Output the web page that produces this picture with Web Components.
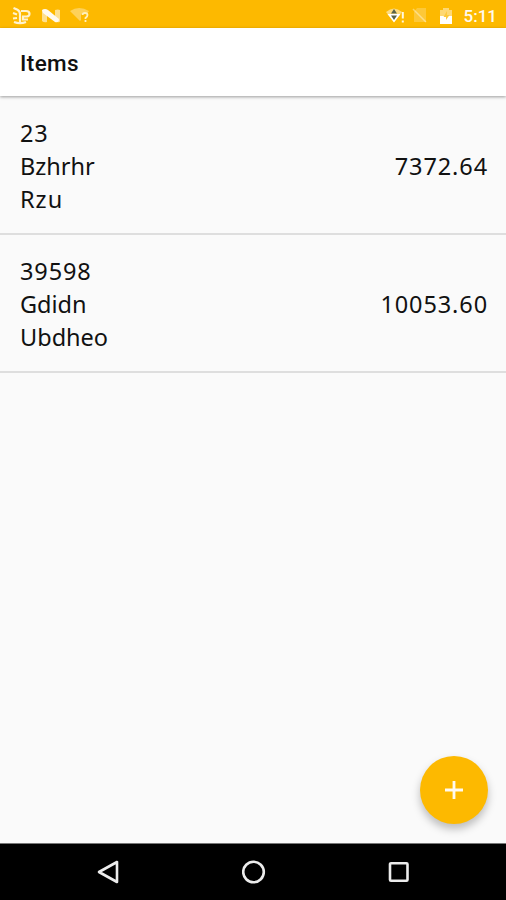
<!DOCTYPE html>
<html lang="en">
<head>
<meta charset="utf-8">
<title>Items</title>
<style>
    body {
        margin: 0;
        --accent: #fdb900;
        --page: #fafafa;
        font-family: "Noto Sans", sans-serif;
    }
    .wide {
        letter-spacing: 1px;
    }
</style>
</head>
<body>
<items-screen>
    <status-bar slot="status" time="5:11"></status-bar>
    <app-bar slot="header">Items</app-bar>
    <item-row>
        <span slot="code">23</span>
        <span slot="name">Bzhrhr</span>
        <span slot="unit" class="wide">Rzu</span>
        <span slot="price">7372.64</span>
    </item-row>
    <item-row>
        <span slot="code">39598</span>
        <span slot="name">Gdidn</span>
        <span slot="unit">Ubdheo</span>
        <span slot="price">10053.60</span>
    </item-row>
    <add-button slot="action"></add-button>
    <nav-bar slot="nav"></nav-bar>
</items-screen>

<script>
class ItemsScreen extends HTMLElement {
    connectedCallback() {
        const shadow = this.attachShadow({mode: 'open'});
        shadow.innerHTML = `
            <style>
                :host {
                    display: flex;
                    flex-direction: column;
                    position: relative;
                    height: 900px;
                    overflow: hidden;
                    background-color: var(--page);
                }
                main {
                    flex: 1;
                }
            </style>
            <slot name="status"></slot>
            <slot name="header"></slot>
            <main><slot></slot></main>
            <slot name="action"></slot>
            <slot name="nav"></slot>`;
    }
}

class StatusBar extends HTMLElement {
    connectedCallback() {
        const shadow = this.attachShadow({mode: 'open'});
        shadow.innerHTML = `
            <style>
                :host {
                    display: flex;
                    justify-content: space-between;
                    align-items: center;
                    box-sizing: border-box;
                    height: 28px;
                    padding: 3px 9px 0 11px;
                    background-color: var(--accent);
                    color: #fffaf0;
                    font: 500 17px/24px Roboto, sans-serif;
                }
                div {
                    display: flex;
                    align-items: center;
                }
                .left { gap: 9px; }
                svg { display: block; }
                .wifi { margin-right: 5px; }
                .sim { margin-right: 13px; }
                .battery { margin-right: 12px; }
            </style>
            <div class="left">
                <svg width="21" height="20" viewBox="0 0 21 20" fill="none" stroke="#fff3cf" stroke-width="2.200">
                    <path d="M2.500 2l3.500 1.500q3 1.500 3 4.500v9M2 7l4 1.500M10 5h5q3.500 0 3.500 2.800t-3.500 2.700h-4M12 10.500v3h5"/>
                    <path d="M2 12.500l4-.5M3 16q6 2.500 12 0"/>
                </svg>
                <svg width="20" height="20" viewBox="0 0 20 20" fill="#fffaf0">
                    <path d="M1 15V5q0-2 3-1l10 8V4q3-1 5 0v11q0 2-3 1L6 8v8q-3 1-5-1z" opacity=".6"/>
                    <path d="M1 4q3-2 6 0l11 9q0 4-4 3L2 7z"/>
                </svg>
                <svg width="21" height="20" viewBox="0 0 21 20">
                    <path d="M0 5Q9-1 19 5l-2 3h-6v6l-1 1z" fill="#fff" opacity=".35"/>
                    <path d="M12.500 9q0-2 2.500-2t2.500 2q0 1.500-2 3v1M15.500 14v2" fill="none" stroke="#fff0bd" stroke-width="1.800"/>
                </svg>
            </div>
            <div>
                <svg class="wifi" width="21" height="20" viewBox="0 0 21 20">
                    <path d="M0 6Q8-1 16 6L8 16z" fill="#fff" opacity=".5"/>
                    <path d="M1.500 8h13L8 16.500z" fill="#fff"/>
                    <path d="M5 7.500L8 3l3 4.500zM5 9.500h6L8 14z" fill="#59624a"/>
                    <path d="M16.800 6v6.500M16.800 14.500v2" stroke="#fff8df" stroke-width="2"/>
                </svg>
                <svg class="sim" width="15" height="18" viewBox="0 0 15 18">
                    <path d="M5 1h9v14H2V5z" fill="#fff" opacity=".22"/>
                    <path d="M1 2l13 13" stroke="#fff" stroke-width="1.500" opacity=".4"/>
                </svg>
                <svg class="battery" width="12" height="18" viewBox="0 0 12 18">
                    <path d="M0 3h3V1h6v2h3v7H0z" fill="#fff" opacity=".45"/>
                    <path d="M0 9h12v8H0z" fill="#fff"/>
                    <path d="M7 4L3.500 10H6v3l3.500-5H7z" fill="#fdc93d"/>
                </svg>
                <span>${this.getAttribute('time')}</span>
            </div>`;
    }
}

class AppBar extends HTMLElement {
    connectedCallback() {
        const shadow = this.attachShadow({mode: 'open'});
        shadow.innerHTML = `
            <style>
                :host {
                    display: flex;
                    align-items: center;
                    box-sizing: border-box;
                    height: 68px;
                    padding: 2px 20px 0;
                    background-color: #fff;
                    box-shadow: 0 1px 3px rgba(0, 0, 0, 0.38);
                    color: #111;
                    font: 500 22.5px/30px Roboto, sans-serif;
                    letter-spacing: 0.4px;
                }
            </style>
            <slot></slot>`;
    }
}

class ItemRow extends HTMLElement {
    connectedCallback() {
        const shadow = this.attachShadow({mode: 'open'});
        shadow.innerHTML = `
            <style>
                :host {
                    display: flex;
                    justify-content: space-between;
                    align-items: center;
                    box-sizing: border-box;
                    height: 138.5px;
                    padding: 4px 18px 0 20px;
                    border-bottom: 2px solid #dedede;
                    color: #111;
                    font-size: 23.5px;
                    line-height: 33px;
                }
                .info {
                    display: flex;
                    flex-direction: column;
                }
                .number {
                    letter-spacing: 0.9px;
                }
            </style>
            <div class="info">
                <slot class="number" name="code"></slot>
                <slot name="name"></slot>
                <slot name="unit"></slot>
            </div>
            <slot class="number" name="price"></slot>`;
    }
}

class AddButton extends HTMLElement {
    connectedCallback() {
        const shadow = this.attachShadow({mode: 'open'});
        shadow.innerHTML = `
            <style>
                :host {
                    position: absolute;
                    right: 18px;
                    bottom: 76px;
                }
                button {
                    display: flex;
                    justify-content: center;
                    align-items: center;
                    width: 68px;
                    height: 68px;
                    padding: 0;
                    border: 0;
                    border-radius: 50%;
                    background-color: var(--accent);
                    box-shadow: 0 5px 8px rgba(0, 0, 0, 0.25);
                }
            </style>
            <button aria-label="Add">
                <svg width="18" height="18" viewBox="0 0 18 18" stroke="#fffaf0" stroke-width="2.800">
                    <path d="M9 0v18M0 9h18"/>
                </svg>
            </button>`;
    }
}

class NavBar extends HTMLElement {
    connectedCallback() {
        const shadow = this.attachShadow({mode: 'open'});
        shadow.innerHTML = `
            <style>
                :host {
                    display: flex;
                    justify-content: center;
                    align-items: center;
                    gap: 121px;
                    box-sizing: border-box;
                    height: 57px;
                    padding-left: 2px;
                    border-top: 1px solid #777;
                    background-color: #000;
                }
                svg {
                    fill: none;
                    stroke: #ececec;
                    stroke-width: 2.600;
                }
            </style>
            <svg width="24" height="24" viewBox="0 0 24 24"><path d="M20 2v20L2 12z" stroke-linejoin="round"/></svg>
            <svg width="24" height="24" viewBox="0 0 24 24"><circle cx="11.500" cy="12" r="10.300"/></svg>
            <svg width="24" height="24" viewBox="0 0 24 24"><rect x="3" y="3.200" width="17.500" height="17.500" rx="1"/></svg>`;
    }
}

customElements.define('items-screen', ItemsScreen);
customElements.define('status-bar', StatusBar);
customElements.define('app-bar', AppBar);
customElements.define('item-row', ItemRow);
customElements.define('add-button', AddButton);
customElements.define('nav-bar', NavBar);
</script>
</body>
</html>
